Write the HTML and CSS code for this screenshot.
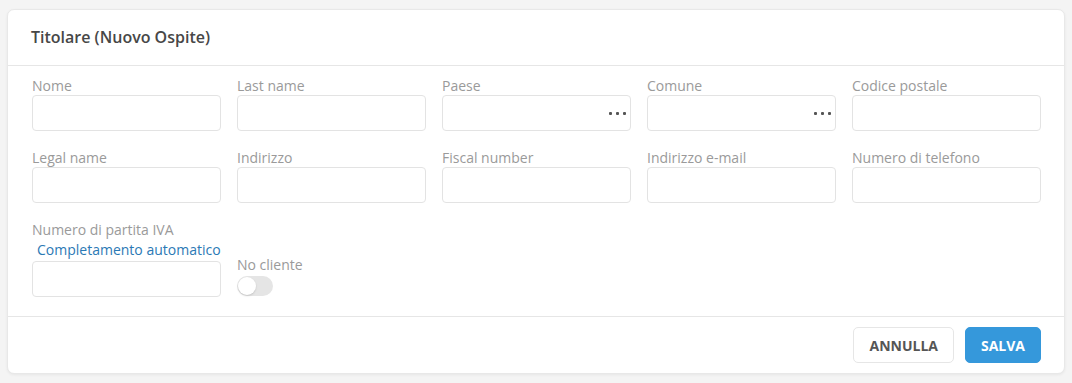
FILE: index.html
```html
<!DOCTYPE html>
<html lang="en">
<head>
    <meta charset="UTF-8">
    <title>Titolare</title>
    <link rel="stylesheet" href="styles.css">
</head>
<body>
    <div class="card">
        <div class="card-header">Titolare (Nuovo Ospite)</div>

        <div class="card-body">
            <div class="form-row">
                <div class="field">
                    <label>Nome</label>
                    <div class="input"></div>
                </div>
                <div class="field">
                    <label>Last name</label>
                    <div class="input"></div>
                </div>
                <div class="field">
                    <label>Paese</label>
                    <div class="input"><span class="dots"><i></i><i></i><i></i></span></div>
                </div>
                <div class="field">
                    <label>Comune</label>
                    <div class="input"><span class="dots"><i></i><i></i><i></i></span></div>
                </div>
                <div class="field">
                    <label>Codice postale</label>
                    <div class="input"></div>
                </div>
            </div>

            <div class="form-row">
                <div class="field">
                    <label>Legal name</label>
                    <div class="input"></div>
                </div>
                <div class="field">
                    <label>Indirizzo</label>
                    <div class="input"></div>
                </div>
                <div class="field">
                    <label>Fiscal number</label>
                    <div class="input"></div>
                </div>
                <div class="field">
                    <label>Indirizzo e-mail</label>
                    <div class="input"></div>
                </div>
                <div class="field">
                    <label>Numero di telefono</label>
                    <div class="input"></div>
                </div>
            </div>

            <div class="form-row last-row">
                <div class="field">
                    <label>Numero di partita IVA</label>
                    <a class="autocomplete">Completamento automatico</a>
                    <div class="input"></div>
                </div>
                <div class="field">
                    <label>No cliente</label>
                    <div class="toggle"><span class="knob"></span></div>
                </div>
            </div>
        </div>

        <div class="card-footer">
            <button class="btn btn-cancel">Annulla</button>
            <button class="btn btn-save">Salva</button>
        </div>
    </div>
</body>
</html>
```

FILE: styles.css
```css
* {
    margin: 0;
    padding: 0;
    box-sizing: border-box;
}

body {
    font-family: 'Open Sans', 'Noto Sans', sans-serif;
    background: #f4f4f4;
    color: #444;
    padding: 9px 7px;
}

.card {
    background: #fff;
    border: 1px solid #e8e8e8;
    border-radius: 7px;
    box-shadow: 0 1px 3px rgba(0, 0, 0, 0.06);
}

.card-header {
    padding: 16px 23px 17px;
    font-size: 16px;
    font-weight: 600;
    line-height: 22px;
    color: #474747;
    border-bottom: 1px solid #e6e6e6;
}

.card-body {
    padding: 10px 23px 19px 24px;
}

.form-row {
    display: grid;
    grid-template-columns: repeat(5, 1fr);
    column-gap: 16px;
    margin-bottom: 17px;
}

.form-row.last-row {
    margin-bottom: 0;
    align-items: end;
}

.field label {
    display: block;
    font-size: 14px;
    line-height: 19px;
    color: #9a9a9a;
}

.input {
    position: relative;
    height: 36px;
    border: 1px solid #e3e3e3;
    border-radius: 4px;
    background: #fff;
}

.dots {
    position: absolute;
    right: 4px;
    top: 16px;
    display: flex;
    gap: 4px;
}

.dots i {
    width: 3px;
    height: 3px;
    border-radius: 1px;
    background: #555;
}

.autocomplete {
    display: block;
    padding-left: 5px;
    font-size: 14px;
    line-height: 20px;
    color: #2b79b5;
    margin-top: 1px;
    margin-bottom: 1px;
}

.toggle {
    position: relative;
    width: 36px;
    height: 20px;
    border-radius: 10px;
    background: #e5e5e5;
    margin-top: 2px;
    margin-bottom: 1px;
}

.knob {
    position: absolute;
    left: 1px;
    top: 1px;
    width: 18px;
    height: 18px;
    border-radius: 50%;
    background: #fff;
    box-shadow: 0 1px 2px rgba(0, 0, 0, 0.15);
}

.card-footer {
    display: flex;
    justify-content: flex-end;
    gap: 11px;
    padding: 10px 23px 10px 24px;
    border-top: 1px solid #e6e6e6;
}

.btn {
    height: 36px;
    padding: 0 15px;
    border-radius: 5px;
    font-family: inherit;
    font-size: 14px;
    font-weight: 700;
    text-transform: uppercase;
    cursor: pointer;
}

.btn-cancel {
    background: #fff;
    color: #555;
    border: 1px solid #e6e6e6;
}

.btn-save {
    background: #3598db;
    color: #fff;
    border: 1px solid #3598db;
}
```
